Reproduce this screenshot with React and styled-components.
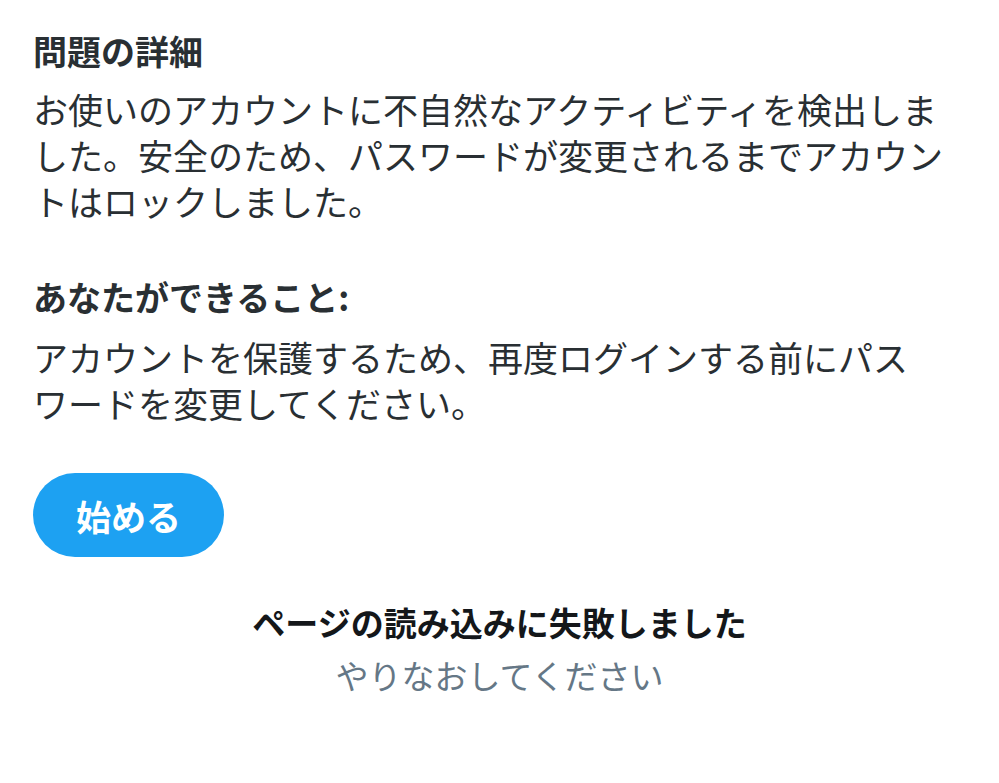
import React from "react";
import styled, { createGlobalStyle } from "styled-components";

const GlobalStyle = createGlobalStyle`
  html, body {
    margin: 0;
    padding: 0;
    background: #ffffff;
  }
  body {
    font-family: "Noto Sans CJK JP", "Noto Sans", sans-serif;
    -webkit-font-smoothing: antialiased;
  }
`;

const Page = styled.div`
  width: 999px;
  min-height: 783px;
  box-sizing: border-box;
  padding: 28px 33px 0 33px;
  display: flex;
  flex-direction: column;
  line-break: strict;
`;

const Section = styled.section`
  display: flex;
  flex-direction: column;
  gap: ${(p) => p.$gap || 12}px;
  margin-bottom: ${(p) => p.$after || 0}px;
`;

const Heading = styled.h2`
  margin: 0;
  font-size: 34px;
  line-height: 46px;
  font-weight: 700;
  color: #292f33;
`;

const Body = styled.p`
  margin: 0;
  font-size: 35px;
  line-height: 46px;
  font-weight: 400;
  color: #292f33;
`;

const NoBreak = styled.span`
  white-space: nowrap;
`;

const Button = styled.button`
  align-self: flex-start;
  width: 191px;
  height: 84px;
  border: none;
  border-radius: 42px;
  background: #1da1f2;
  color: #ffffff;
  font-family: "Noto Sans CJK JP", "Noto Sans", sans-serif;
  font-size: 35px;
  font-weight: 700;
  padding: 0;
  display: flex;
  align-items: center;
  justify-content: center;
  cursor: pointer;
`;

const ErrorBox = styled.div`
  margin-top: 43px;
  display: flex;
  flex-direction: column;
  align-items: center;
  gap: 9px;
`;

const ErrorTitle = styled.div`
  font-size: 33px;
  line-height: 44px;
  font-weight: 700;
  color: #14171a;
`;

const ErrorHint = styled.div`
  font-size: 33px;
  line-height: 44px;
  font-weight: 400;
  color: #657786;
`;

export default function App() {
  return (
    <>
      <GlobalStyle />
      <Page>
        <Section $gap={12} $after={50}>
          <Heading>問題の詳細</Heading>
          <Body>
            お使いのアカウントに不自然なアクティビティを検出しました。安全のため、パスワードが変更されるまでアカウントはロックしました。
          </Body>
        </Section>
        <Section $gap={14} $after={47}>
          <Heading>あなたができること:</Heading>
          <Body>
            アカウントを保護するため、再度ログインする前にパス<NoBreak>ワード</NoBreak>を変更してください。
          </Body>
        </Section>
        <Button>始める</Button>
        <ErrorBox>
          <ErrorTitle>ページの読み込みに失敗しました</ErrorTitle>
          <ErrorHint>やりなおしてください</ErrorHint>
        </ErrorBox>
      </Page>
    </>
  );
}
